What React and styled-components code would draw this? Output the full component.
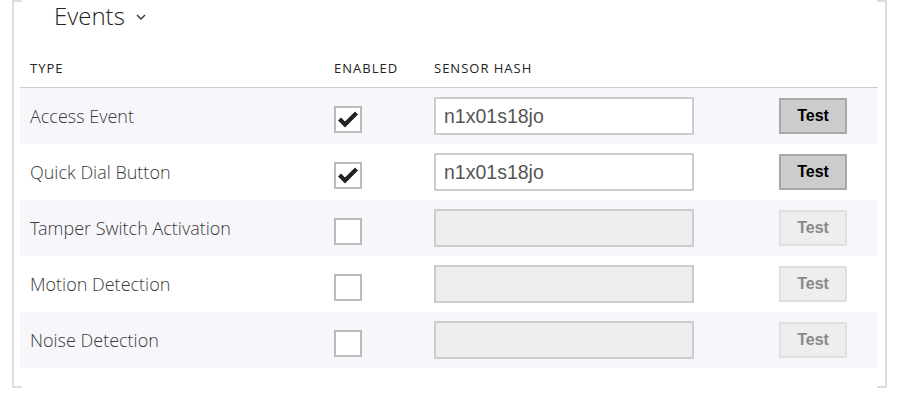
import styled, { createGlobalStyle } from "styled-components";

const GlobalStyle = createGlobalStyle`
  body {
    margin: 0;
    background: #fff;
    font-family: "Open Sans", "Noto Sans", sans-serif;
  }
`;

const events = [
  { name: "Access Event", enabled: true, hash: "n1x01s18jo" },
  { name: "Quick Dial Button", enabled: true, hash: "n1x01s18jo" },
  { name: "Tamper Switch Activation", enabled: false, hash: "" },
  { name: "Motion Detection", enabled: false, hash: "" },
  { name: "Noise Detection", enabled: false, hash: "" },
];

const App = () => {
  return (
    <Page>
      <GlobalStyle />
      <Frame>
        <Title>
          Events
          <Chevron width="10" height="6" viewBox="0 0 10 6">
            <polyline points="1,1 5,5 9,1" fill="none" stroke="#333" strokeWidth="1.4" />
          </Chevron>
        </Title>
        <HeaderRow>
          <HeadCell>Type</HeadCell>
          <HeadCell>Enabled</HeadCell>
          <HeadCell>Sensor Hash</HeadCell>
        </HeaderRow>
        {events.map((ev, i) => (
          <Row key={ev.name} striped={i % 2 === 0}>
            <Label>{ev.name}</Label>
            <Check>
              {ev.enabled && (
                <svg width="24" height="24" viewBox="0 0 24 24">
                  <polyline points="3.5,12 9,17.5 20.5,6" fill="none" stroke="#222" strokeWidth="4.2" />
                </svg>
              )}
            </Check>
            <HashInput disabled={!ev.enabled} defaultValue={ev.hash} />
            <TestButton disabled={!ev.enabled}>Test</TestButton>
          </Row>
        ))}
      </Frame>
    </Page>
  );
};

export default App;

const Page = styled.div`
  padding: 0 12px;
`;

const Frame = styled.div`
  position: relative;
  margin-top: 14px;
  padding: 0 7px 20px 6px;
  border-left: 2px solid #ddd;
  border-right: 2px solid #ddd;

  &::before,
  &::after {
    content: "";
    position: absolute;
    left: 0;
    right: 0;
    height: 2px;
    background: linear-gradient(to right, #ddd 0 8px, transparent 8px calc(100% - 8px), #ddd calc(100% - 8px));
  }
  &::before { top: 0; }
  &::after { bottom: 0; }
`;

const Title = styled.div`
  display: flex;
  align-items: center;
  margin-top: -14px;
  padding-left: 34px;
  height: 32px;
  line-height: 32px;
  font-family: "Open Sans Light", "Open Sans", sans-serif;
  font-size: 24px;
  font-weight: 300;
  color: #222;
`;

const Chevron = styled.svg`
  margin-left: 11px;
  margin-top: 2px;
`;

const Grid = styled.div`
  display: grid;
  grid-template-columns: 304px 100px 345px 1fr;
  padding-left: 10px;
`;

const HeaderRow = styled(Grid)`
  margin-top: 28px;
  padding-bottom: 11px;
  border-bottom: 1px solid #ccc;
`;

const HeadCell = styled.div`
  font-size: 13px;
  line-height: 16px;
  letter-spacing: 1px;
  text-transform: uppercase;
  color: #222;
`;

const Row = styled(Grid)`
  height: 56px;
  align-items: center;
  background: ${(p) => (p.striped ? "#f7f6fa" : "#fff")};
`;

const Label = styled.div`
  font-family: "Open Sans Light", "Open Sans", sans-serif;
  font-size: 18px;
  font-weight: 300;
  color: #3a3a3a;
`;

const Check = styled.div`
  box-sizing: border-box;
  width: 28px;
  height: 27px;
  margin-top: 6px;
  border: 2px solid #bbb;
  background: #fff;
  display: flex;
  align-items: center;
  justify-content: center;
`;

const HashInput = styled.input`
  box-sizing: border-box;
  width: 260px;
  height: 38px;
  padding: 0 8px;
  border: 2px solid #ccc;
  outline: none;
  background: ${(p) => (p.disabled ? "#eee" : "#fff")};
  font-family: "Liberation Sans", Arial, sans-serif;
  font-size: 19.5px;
  color: #555;
`;

const TestButton = styled.button`
  box-sizing: border-box;
  width: 68px;
  height: 36px;
  padding: 0;
  border: 2px solid ${(p) => (p.disabled ? "#e0e0e0" : "#a8a8a8")};
  background: ${(p) => (p.disabled ? "#eee" : "#ccc")};
  font-family: "Liberation Sans", Arial, sans-serif;
  font-weight: bold;
  font-size: 16px;
  color: ${(p) => (p.disabled ? "#888" : "#000")};
`;
